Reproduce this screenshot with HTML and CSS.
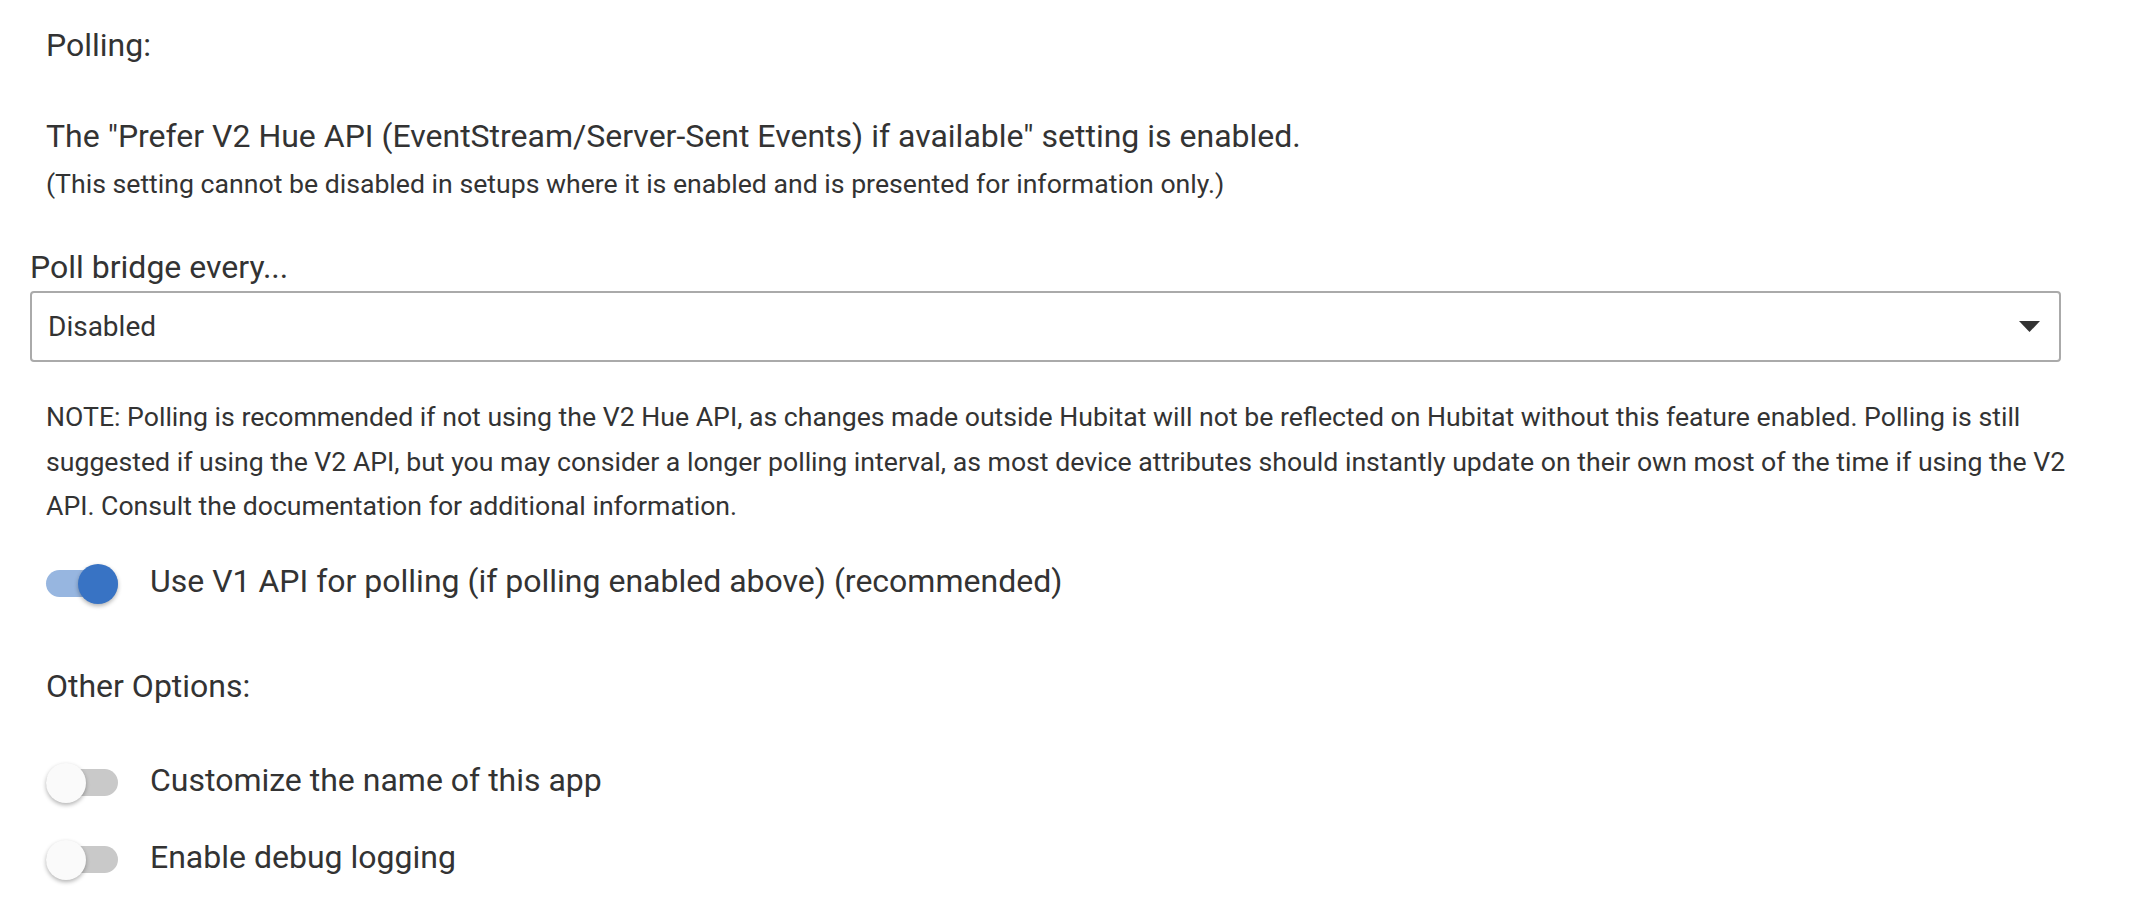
FILE: index.html
```html
<!DOCTYPE html>
<html>
    <head>
        <title>Hue Bridge Options</title>
        <meta charset="utf-8"/>
        <link rel="stylesheet" href="styles.css">
    </head>
    <body>
        <div class="page">
            <p class="heading">Polling:</p>

            <div class="info">
                <p class="info-main">The "Prefer V2 Hue API (EventStream/Server-Sent Events) if available" setting is enabled.</p>
                <p class="info-sub">(This setting cannot be disabled in setups where it is enabled and is presented for information only.)</p>
            </div>

            <label class="field-label" for="pollInterval">Poll bridge every...</label>
            <div class="select" id="pollInterval">
                <span class="select-value">Disabled</span>
                <svg class="select-arrow" width="21" height="11" viewBox="0 0 21 11"><path d="M0 0 H21 L10.5 11 Z" fill="#333"/></svg>
            </div>

            <p class="note">NOTE: Polling is recommended if not using the V2 Hue API, as changes made outside Hubitat will not be reflected on Hubitat without this feature enabled. Polling is still suggested if using the V2 API, but you may consider a longer polling interval, as most device attributes should instantly update on their own most of the time if using the V2 API. Consult the documentation for additional information.</p>

            <div class="toggle-row first">
                <span class="toggle on"><span class="thumb"></span></span>
                <span class="toggle-text">Use V1 API for polling (if polling enabled above) (recommended)</span>
            </div>

            <p class="heading other">Other Options:</p>

            <div class="toggle-row second">
                <span class="toggle"><span class="thumb"></span></span>
                <span class="toggle-text">Customize the name of this app</span>
            </div>
            <div class="toggle-row third">
                <span class="toggle"><span class="thumb"></span></span>
                <span class="toggle-text">Enable debug logging</span>
            </div>
        </div>
    </body>
</html>
```

FILE: styles.css
```css
* { box-sizing: border-box; }

body {
    background: #fff;
    color: #333;
    font-family: Roboto, "Liberation Sans", sans-serif;
    margin: 0px;
    padding: 0px;
}

p { margin: 0px; }

.page {
    padding: 23px 0px 0px 30px;
    width: 2070px;
}

.heading {
    font-size: 32px;
    line-height: 44px;
    padding-left: 16px;
}

.info {
    margin-top: 47px;
    padding-left: 16px;
}

.info-main {
    font-size: 32px;
    line-height: 44px;
}

.info-sub {
    font-size: 26.65px;
    line-height: 52px;
}

.field-label {
    display: block;
    font-size: 32px;
    line-height: 44px;
    margin-top: 35px;
}

.select {
    align-items: center;
    border: 2px solid #aaa;
    border-radius: 4px;
    display: flex;
    height: 71px;
    justify-content: space-between;
    margin-top: 2px;
    padding: 0px 19px 0px 16px;
    width: 2031px;
}

.select-value {
    font-size: 28px;
}

.note {
    font-size: 26.65px;
    line-height: 44.5px;
    margin-top: 33px;
    padding-left: 16px;
    width: 2040px;
}

.toggle-row {
    align-items: center;
    display: flex;
    height: 56px;
    padding-left: 16px;
}

.toggle-row.first { margin-top: 27px; }
.toggle-row.second { margin-top: 47px; }
.toggle-row.third { margin-top: 21px; }

.heading.other { margin-top: 52px; }

.toggle {
    background: #c9c9c9;
    border-radius: 14px;
    display: block;
    height: 27px;
    margin-right: 32px;
    position: relative;
    width: 72px;
}

.toggle .thumb {
    background: #fafafa;
    border-radius: 50%;
    box-shadow: 0px 2px 4px rgba(0, 0, 0, 0.3);
    height: 40px;
    left: 0px;
    position: absolute;
    top: -6.5px;
    width: 40px;
}

.toggle.on { background: #97b6e0; }

.toggle.on .thumb {
    background: #3873c4;
    left: 32px;
}

.toggle-text {
    font-size: 32px;
    line-height: 44px;
    padding-bottom: 6px;
}
```
